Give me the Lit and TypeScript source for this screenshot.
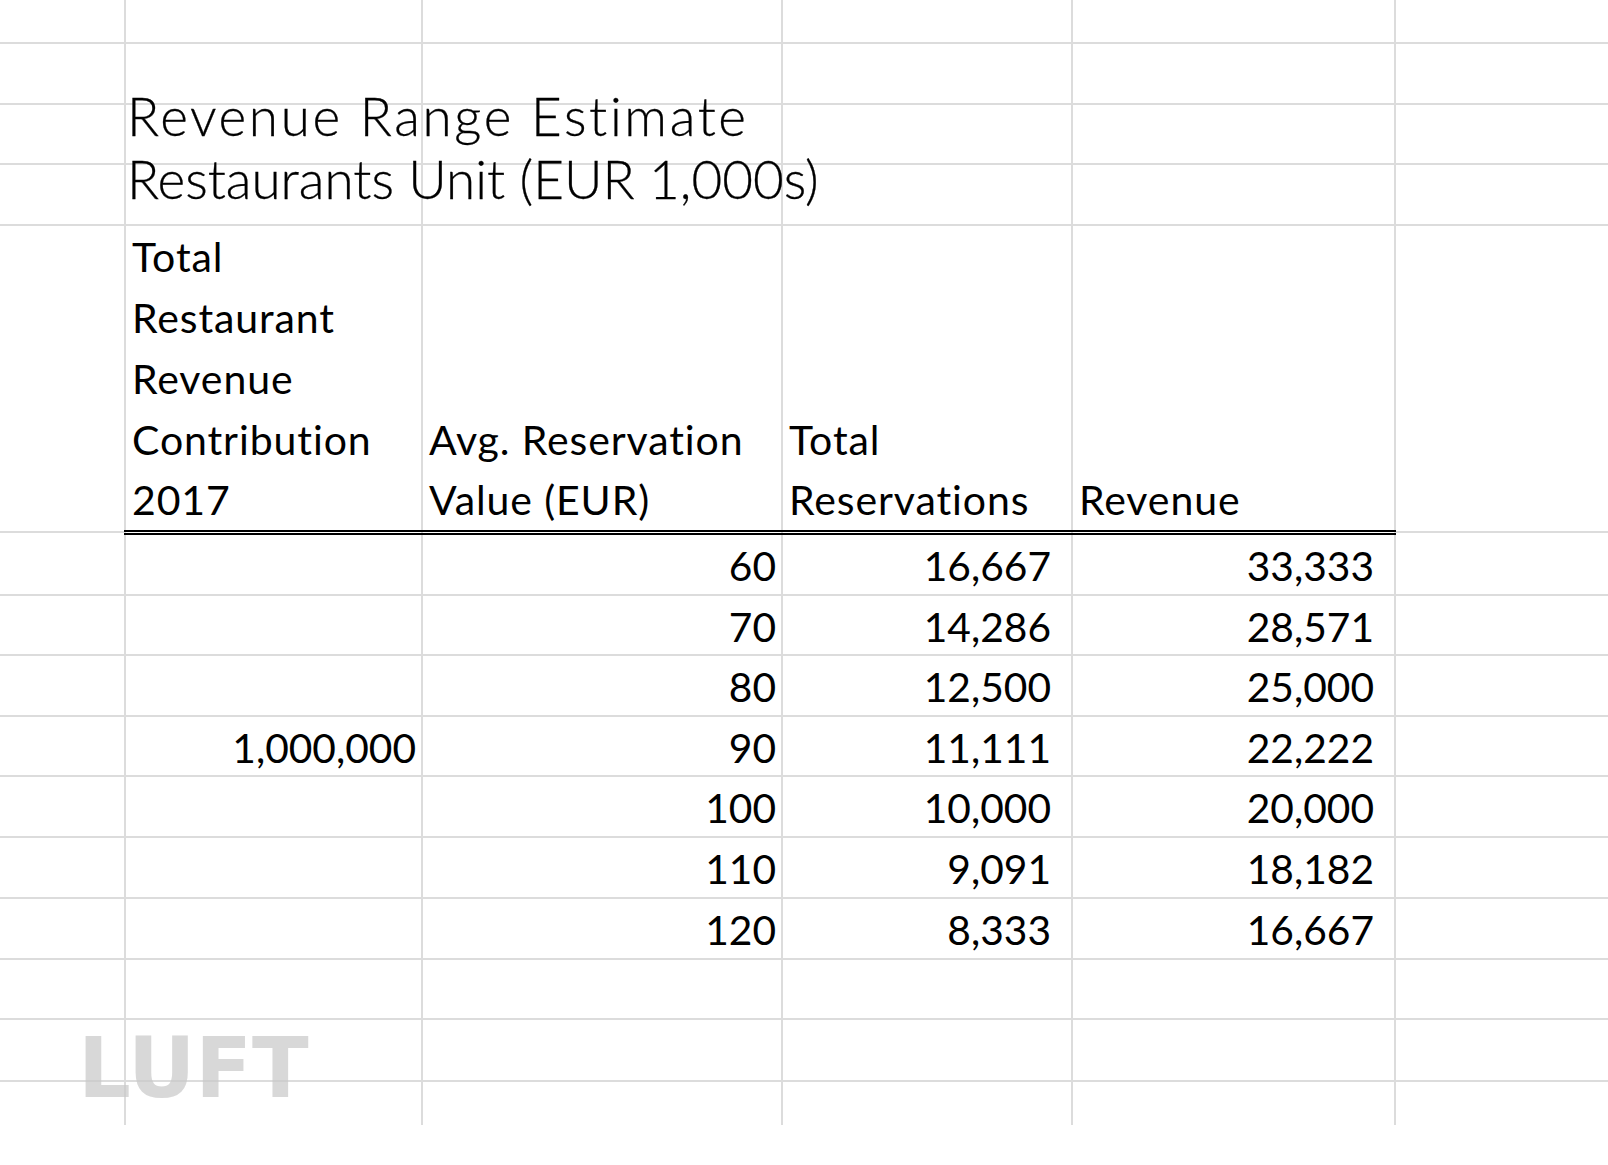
import { LitElement, html, css } from "lit";
import { customElement } from "lit/decorators.js";

const rows = [
  ["", "60", "16,667", "33,333"],
  ["", "70", "14,286", "28,571"],
  ["", "80", "12,500", "25,000"],
  ["1,000,000", "90", "11,111", "22,222"],
  ["", "100", "10,000", "20,000"],
  ["", "110", "9,091", "18,182"],
  ["", "120", "8,333", "16,667"],
];

@customElement("app-root")
class AppRoot extends LitElement {
  static styles = css`
    :host { display: block; background: #fff; height: 1165px; position: relative; overflow: hidden; }
    .sheet {
      display: grid;
      grid-template-columns: 126px 297px 360px 290px 323px 1fr;
      grid-template-rows: 44px 61px 60px 61px 309px 61px 60px 61px 60px 61px 61px 61px 60px 62px 43px;
      font-family: Lato, "Liberation Sans", sans-serif;
      color: #000;
    }
    .c { border-right: 2px solid #dcdcdc; border-bottom: 2px solid #dcdcdc; box-sizing: border-box; min-width: 0; }
    .c.end { border-right: 0; }
    .c.last { border-bottom: 0; }
    .title {
      grid-column: 2 / -1; grid-row: 2 / 5; align-self: end;
      font-size: 53px; font-weight: 300; line-height: 61px; color: #000;
      padding: 0 0 17px 1px; white-space: nowrap; z-index: 1;
      display: flex; flex-direction: column;
      -webkit-text-stroke: 0.3px #000;
    }
    .l1 { letter-spacing: 2.65px; margin-bottom: 2px; }
    .l2 { letter-spacing: 0; }
    .head { grid-row: 5; position: relative; display: flex; flex-direction: column; justify-content: flex-end;
      font-size: 41px; letter-spacing: 0.9px; line-height: 60.7px; padding: 0 0 4px 6px; border-bottom: 0; }
    .head span { white-space: nowrap; }
    .head::after { content: ""; position: absolute; left: -2px; right: -2px; bottom: 0; height: 2px; background: #000; box-shadow: 0 -3px 0 #000; }
    .side { grid-row: 5; margin-bottom: 2px; }
    .num { font-size: 40.7px; line-height: 62px; text-align: right; padding-right: 5px; white-space: nowrap; }
    .num.wide { padding-right: 20px; }
    .mark { position: absolute; left: 78px; top: 1021px; font: 700 83px/96px "DejaVu Sans", sans-serif; color: rgba(200, 200, 200, 0.7); }
  `;

  render() {
    const topLines = [0, 1, 2, 3];
    return html`
      <div class="sheet">
        ${topLines.map((r) =>
          [0, 1, 2, 3, 4, 5].map(
            (c) => html`<div class="c ${c === 5 ? "end" : ""}" style="grid-row:${r + 1};grid-column:${c + 1}"></div>`
          )
        )}
        <div class="title"><span class="l1">Revenue Range Estimate</span><span class="l2">Restaurants Unit (EUR 1,000s)</span></div>
        <div class="c side" style="grid-column:1"></div>
        <div class="c head" style="grid-column:2">
          <span>Total</span><span>Restaurant</span><span>Revenue</span><span>Contribution</span><span>2017</span>
        </div>
        <div class="c head" style="grid-column:3"><span>Avg. Reservation</span><span>Value (EUR)</span></div>
        <div class="c head" style="grid-column:4"><span>Total</span><span>Reservations</span></div>
        <div class="c head" style="grid-column:5"><span>Revenue</span></div>
        <div class="c side end" style="grid-column:6"></div>
        ${rows.map(
          (r) => html`
            <div class="c"></div>
            <div class="c num">${r[0]}</div>
            <div class="c num">${r[1]}</div>
            <div class="c num wide">${r[2]}</div>
            <div class="c num wide">${r[3]}</div>
            <div class="c end"></div>
          `
        )}
        ${[0, 1].map(() =>
          [0, 1, 2, 3, 4, 5].map((c) => html`<div class="c ${c === 5 ? "end" : ""}"></div>`)
        )}
        ${[0, 1, 2, 3, 4, 5].map((c) => html`<div class="c last ${c === 5 ? "end" : ""}"></div>`)}
      </div>
      <div class="mark">LUFT</div>
    `;
  }
}
